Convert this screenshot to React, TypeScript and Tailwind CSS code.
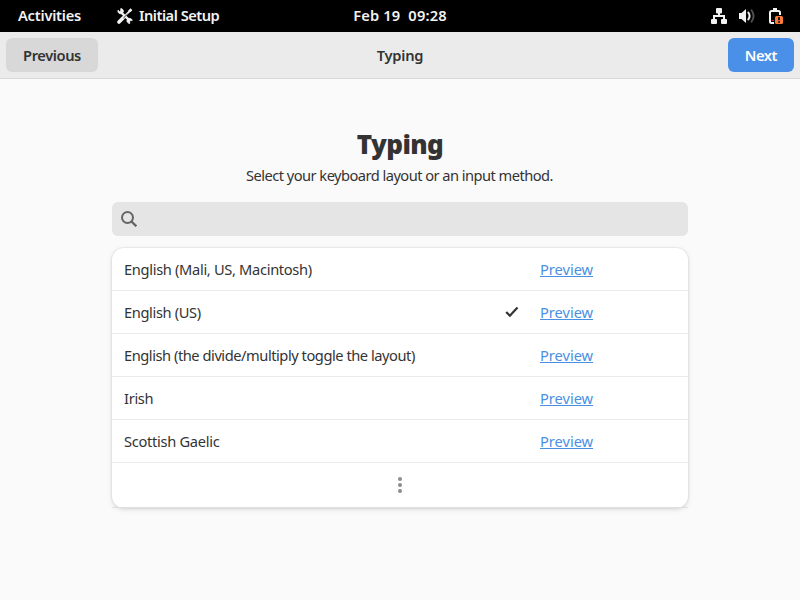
const layouts = [
  { name: 'English (Mali, US, Macintosh)', tracking: 'tracking-[-0.33px]' },
  { name: 'English (US)', tracking: 'tracking-[-0.37px]', selected: true },
  { name: 'English (the divide/multiply toggle the layout)', tracking: 'tracking-[-0.46px]' },
  { name: 'Irish', tracking: 'tracking-[-0.32px]' },
  { name: 'Scottish Gaelic', tracking: 'tracking-[-0.3px]' },
];

function ToolsIcon() {
  return (
    <svg className="h-4 w-4" viewBox="0 0 16 16" fill="none" stroke="#f2f2f2">
      <path d="M4 4.300 12.200 12.200" strokeWidth="2.300" />
      <path d="M1 2.200v1.900A2.900 2.900 0 0 0 6.400 3.600 2.900 2.900 0 0 0 3.800.600v2.200L2.700 3.700Z" fill="#f2f2f2" strokeWidth=".9" />
      <path d="M15.300 12.300A2.900 2.900 0 0 0 10 12 2.900 2.900 0 0 0 12.700 15.500v-2l1-1Z" fill="#f2f2f2" strokeWidth=".9" />
      <path d="M13.800 1.800 6.500 9.300" strokeWidth="1.800" />
      <path d="M12 3.600 14.500 1.200" strokeWidth="2.600" />
      <path d="M2 14 6 10" strokeWidth="3.600" strokeLinecap="round" />
      <path d="M6.400 10 10.500 6" stroke="#000" strokeWidth=".7" />
    </svg>
  );
}

function NetworkIcon() {
  return (
    <svg className="h-4 w-4" viewBox="0 0 16 16" fill="#f2f2f2">
      <rect x="5" y="0" width="6" height="5.500" rx="1" />
      <rect x="0" y="11" width="6" height="5" rx="1" />
      <rect x="10" y="11" width="6" height="5" rx="1" />
      <path d="M7 5h2v2h5v4h-2V9H4v2H2V7h5Z" />
    </svg>
  );
}

function VolumeIcon() {
  return (
    <svg className="h-4 w-4" viewBox="0 0 16 16" fill="none" stroke="#f2f2f2">
      <path d="M0 5h2.500L7 1v14l-4.500-4H0Z" fill="#f2f2f2" stroke="none" />
      <path d="M9.300 4.500q2.600 3.500 0 7" strokeWidth="2" strokeLinecap="round" />
      <path d="M12.500 2.300q4.200 5.700 0 11.400" stroke="#505050" strokeWidth="1.900" strokeLinecap="round" />
    </svg>
  );
}

function BatteryIcon() {
  return (
    <svg className="h-4 w-4" viewBox="0 0 16 16" fill="none">
      <path d="M6 15H3.500A1.500 1.500 0 0 1 2 13.500v-9A1.500 1.500 0 0 1 3.500 3h7A1.500 1.500 0 0 1 12 4.500V7" stroke="#f2f2f2" strokeWidth="2" />
      <path d="M5 0h4v3H5Z" fill="#f2f2f2" />
      <path d="M3.500 12h2.500v1H3.500Z" fill="#e01b24" />
      <rect x="7" y="8" width="8" height="8" rx="1.500" fill="#ff7b3a" />
      <path d="M10 9.300h2v3h-2ZM10 13.200h2v1.500h-2Z" fill="#111" />
    </svg>
  );
}

export default function App() {
  return (
    <div className="flex h-[600px] w-[800px] flex-col overflow-hidden bg-[#fafafa] font-['Noto_Sans',sans-serif] text-[14.67px] text-[#333333]">
      <header className="grid h-8 shrink-0 grid-cols-3 items-center bg-black font-semibold text-[#f2f2f2]">
        <div className="flex items-center whitespace-nowrap pl-[18px]">
          <span className="w-[99px] pb-[3px] tracking-[-0.23px]">Activities</span>
          <ToolsIcon />
          <span className="ml-[6px] pb-[3px] tracking-[-0.49px]">Initial Setup</span>
        </div>
        <div className="whitespace-pre pb-[3px] text-center tracking-[0.16px]">Feb 19  09:28</div>
        <div className="flex justify-end gap-3 pr-4">
          <NetworkIcon />
          <VolumeIcon />
          <span className="ml-px">
            <BatteryIcon />
          </span>
        </div>
      </header>

      <div className="grid h-[47px] shrink-0 grid-cols-3 items-center border-b border-[#d8d8d8] bg-[#ebebeb] px-[6px] font-semibold">
        <button className="h-[34px] w-[92px] rounded-[6px] bg-[#d8d8d8] tracking-[-0.42px]">Previous</button>
        <div className="text-center tracking-[-0.23px]">Typing</div>
        <button className="h-[34px] w-[66px] justify-self-end rounded-[6px] bg-[#4a90e8] tracking-[-0.45px] text-white">Next</button>
      </div>

      <main className="mx-auto flex w-[576px] flex-col pt-[47px]">
        <h1 className="h-9 text-center text-[26px] font-black leading-9 tracking-[-0.6px]">Typing</h1>
        <p className="mt-[2px] h-[22px] pr-px text-center leading-[22px] tracking-[-0.54px]">Select your keyboard layout or an input method.</p>
        <div className="mt-4 flex h-[34px] items-center rounded-[6px] bg-[#e5e5e5] pl-[9px]">
          <svg className="h-4 w-4" viewBox="0 0 16 16" fill="none" stroke="#656565" strokeWidth="2">
            <circle cx="6.500" cy="6.500" r="5.500" />
            <path d="m10.500 10.500 4.800 4.800" strokeWidth="2.300" />
          </svg>
        </div>
        <div className="mt-3 rounded-[12px] bg-white shadow-[0_0_0_1px_rgba(0,0,0,0.03),0_1px_3px_1px_rgba(0,0,0,0.07),0_2px_6px_2px_rgba(0,0,0,0.03)]">
          {layouts.map((layout) => (
            <div key={layout.name} className="flex h-[43px] items-center border-b border-[#ebebeb] pl-3">
              <span className={`w-[380px] whitespace-nowrap ${layout.tracking}`}>{layout.name}</span>
              <span className="w-9">
                {layout.selected && (
                  <svg className="h-4 w-4" viewBox="0 0 16 16" fill="none" stroke="#333" strokeWidth="2.200">
                    <path d="m2.200 8 3.700 3.700L13.500 3.500" />
                  </svg>
                )}
              </span>
              <a className="tracking-[-0.03px] text-[#4a90e2] underline decoration-1 underline-offset-1">Preview</a>
            </div>
          ))}
          <div className="flex h-[45px] items-center justify-center border-b border-[#e0e0e0]">
            <svg className="h-4 w-4" viewBox="0 0 16 16" fill="#8b8b8b">
              <circle cx="8" cy="2" r="2" />
              <circle cx="8" cy="8" r="2" />
              <circle cx="8" cy="14" r="2" />
            </svg>
          </div>
        </div>
      </main>
    </div>
  );
}
